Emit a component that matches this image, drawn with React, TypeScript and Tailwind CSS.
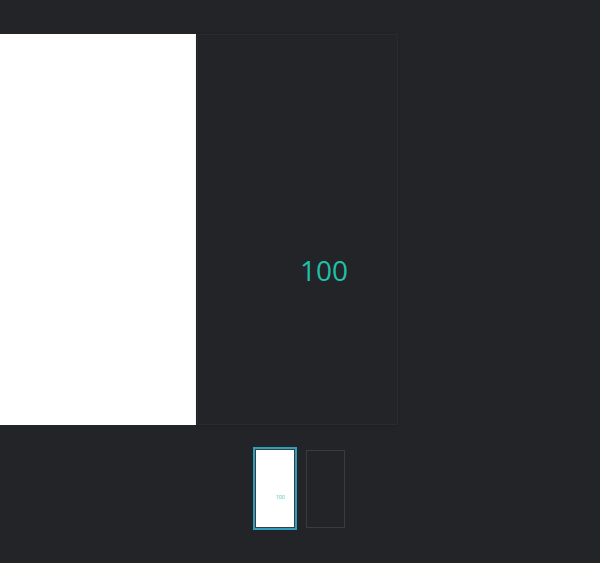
export default function App() {
  return (
    <div className="w-[600px] h-[563px] bg-[#232427] overflow-hidden" style={{ fontFamily: '"Open Sans", "Noto Sans", sans-serif' }}>
      <div className="pt-[34px] flex">
        <div className="-ml-[5px] w-[201px] h-[391px] bg-white shrink-0" />
        <div className="ml-[1px] w-[201px] h-[391px] shrink-0 bg-[#232428] border border-[#2a2b2f] shadow-[0_0_3px_rgba(0,0,0,0.2)]">
          <div className="pl-[102px] pt-[217px] text-[28px] leading-[36px] text-[#1fc0a8]">100</div>
        </div>
      </div>
      <div className="mt-[22px] flex justify-center items-center gap-[9px] pr-[2px]">
        <div className="w-[44px] h-[83px] border-2 border-[#2f9fc0] p-[1px] bg-[#3a3d42]">
          <div className="w-full h-full bg-white">
            <div className="pl-[20px] pt-[44px] text-[5px] leading-[6px] text-[#1fc0a8]">100</div>
          </div>
        </div>
        <div className="w-[39px] h-[78px] border border-[#3a3b3e] bg-[#232427]" />
      </div>
    </div>
  );
}
